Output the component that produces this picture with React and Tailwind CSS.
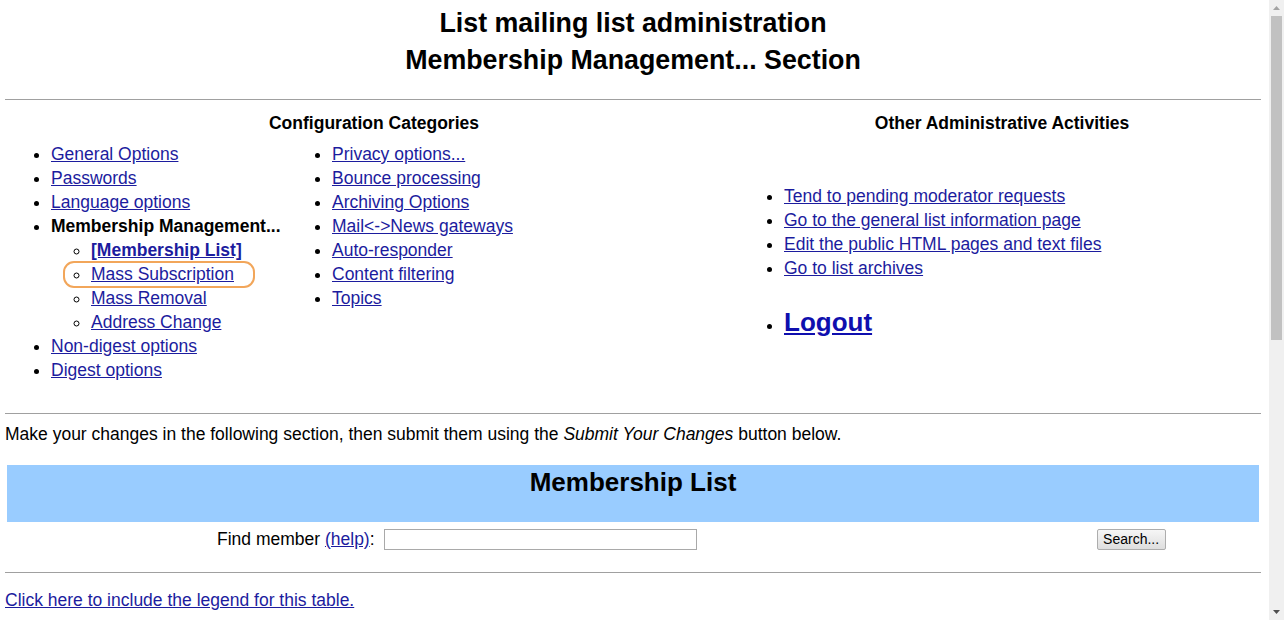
import React from 'react';

const LINK = 'text-[#1c1c9e] underline';

const leftCol1 = ['General Options', 'Passwords', 'Language options'];
const subItems = ['Mass Subscription', 'Mass Removal', 'Address Change'];
const leftCol2 = [
    'Privacy options...',
    'Bounce processing',
    'Archiving Options',
    'Mail<->News gateways',
    'Auto-responder',
    'Content filtering',
    'Topics',
];
const others = [
    'Tend to pending moderator requests',
    'Go to the general list information page',
    'Edit the public HTML pages and text files',
    'Go to list archives',
];

function Scrollbar() {
    return (
        <div className="w-[15px] h-[620px] bg-[#f0f0f0] flex flex-col items-center shrink-0">
            <div className="h-[16px] flex items-center justify-center">
                <svg width="7" height="4" viewBox="0 0 7 4">
                    <path d="M0 4 L3.5 0 L7 4 Z" fill="#a3a3a3" />
                </svg>
            </div>
            <div className="w-[11px] h-[324px] bg-[#c1c1c1]" />
            <div className="flex-1" />
            <div className="h-[16px] flex items-center justify-center">
                <svg width="7" height="4" viewBox="0 0 7 4">
                    <path d="M0 0 L7 0 L3.5 4 Z" fill="#505050" />
                </svg>
            </div>
        </div>
    );
}

export default function App() {
    return (
        <div
            className="flex w-[1284px] h-[620px] overflow-hidden bg-white text-black text-[17.5px] leading-[24px]"
            style={{ fontFamily: '"Liberation Sans", Arial, sans-serif' }}
        >
            <div className="w-[1269px] pl-[5px] pr-[8px] shrink-0">
                {/* Page title */}
                <h1 className="pt-[5px] text-center font-bold text-[26.8px] leading-[37px]">
                    List mailing list administration
                    <br />
                    Membership Management... Section
                </h1>
                <div className="mt-[20px] border-t border-[#a0a0a0]" />

                {/* Categories / other activities */}
                <div className="grid grid-cols-[738px_1fr] pt-[11px]">
                    <div>
                        <div className="text-center font-bold">Configuration Categories</div>
                        <div className="flex mt-[7px] ml-[6px]">
                            <ul className="w-[281px] pl-[40px] list-disc">
                                {leftCol1.map((t) => (
                                    <li key={t}>
                                        <a className={LINK}>{t}</a>
                                    </li>
                                ))}
                                <li>
                                    <b>Membership Management...</b>
                                    <ul className="pl-[40px] list-[circle]">
                                        <li>
                                            <a className={`${LINK} font-bold`}>[Membership List]</a>
                                        </li>
                                        {subItems.map((t, i) => (
                                            <li key={t} className="relative">
                                                <a className={LINK}>{t}</a>
                                                {i === 0 && (
                                                    <span className="absolute left-[-28px] top-[-1px] w-[192px] h-[27px] border-2 border-[#f2a65a] rounded-[11px]" />
                                                )}
                                            </li>
                                        ))}
                                    </ul>
                                </li>
                                <li>
                                    <a className={LINK}>Non-digest options</a>
                                </li>
                                <li>
                                    <a className={LINK}>Digest options</a>
                                </li>
                            </ul>
                            <ul className="pl-[40px] list-disc">
                                {leftCol2.map((t) => (
                                    <li key={t}>
                                        <a className={LINK}>{t}</a>
                                    </li>
                                ))}
                            </ul>
                        </div>
                    </div>
                    <div>
                        <div className="text-center font-bold">Other Administrative Activities</div>
                        <ul className="mt-[49px] pl-[41px] list-disc">
                            {others.map((t) => (
                                <li key={t}>
                                    <a className={LINK}>{t}</a>
                                </li>
                            ))}
                        </ul>
                        <ul className="mt-[25px] pl-[41px] list-disc">
                            <li>
                                <a className="text-[#0f0fae] underline font-bold text-[26px] leading-[34px]">
                                    Logout
                                </a>
                            </li>
                        </ul>
                    </div>
                </div>

                <div className="mt-[31px] border-t border-[#a0a0a0]" />
                <p className="mt-[8px]">
                    Make your changes in the following section, then submit them using the{' '}
                    <i>Submit Your Changes</i> button below.
                </p>

                {/* Membership list table */}
                <div className="mt-[19px] mx-[2px] h-[57px] bg-[#99ccff] pt-[2px]">
                    <h2 className="text-center font-bold text-[26px] leading-[30px]">Membership List</h2>
                </div>
                <div className="mx-[2px] mt-[2px] h-[30px] flex items-center">
                    <div className="pl-[210px] flex items-center">
                        <span>
                            Find member <a className={LINK}>(help)</a>:
                        </span>
                        <input
                            type="text"
                            className="ml-[9px] w-[313px] h-[21px] border border-[#a9a9a9] bg-white"
                        />
                    </div>
                    <button className="ml-[400px] w-[69px] h-[21px] border border-[#adadad] rounded-[2px] bg-gradient-to-b from-[#f6f6f6] to-[#dedede] text-[14px] leading-[19px] text-black">
                        Search...
                    </button>
                </div>
                <div className="mt-[18px] border-t border-[#a0a0a0]" />
                <p className="mt-[15px]">
                    <a className={LINK}>Click here to include the legend for this table.</a>
                </p>
            </div>
            <Scrollbar />
        </div>
    );
}
